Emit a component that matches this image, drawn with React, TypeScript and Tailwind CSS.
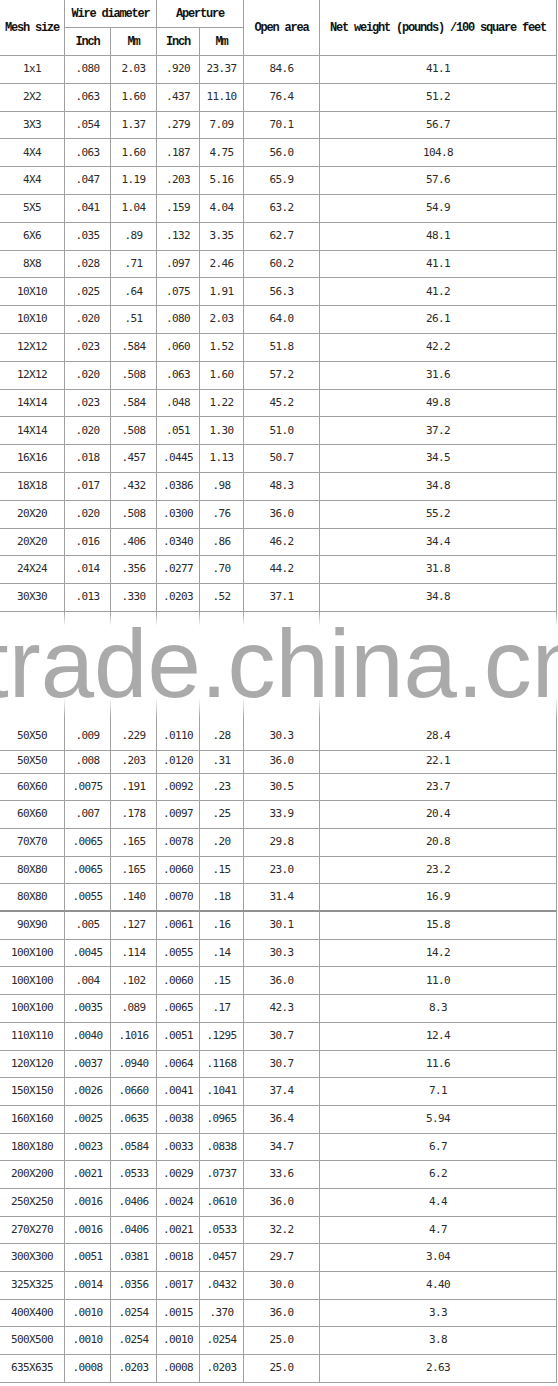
const cols = "grid grid-cols-[65px_46px_46px_43px_44px_76px_237px]";

const topRows: string[][] = [
  ["1x1", ".080", "2.03", ".920", "23.37", "84.6", "41.1"],
  ["2X2", ".063", "1.60", ".437", "11.10", "76.4", "51.2"],
  ["3X3", ".054", "1.37", ".279", "7.09", "70.1", "56.7"],
  ["4X4", ".063", "1.60", ".187", "4.75", "56.0", "104.8"],
  ["4X4", ".047", "1.19", ".203", "5.16", "65.9", "57.6"],
  ["5X5", ".041", "1.04", ".159", "4.04", "63.2", "54.9"],
  ["6X6", ".035", ".89", ".132", "3.35", "62.7", "48.1"],
  ["8X8", ".028", ".71", ".097", "2.46", "60.2", "41.1"],
  ["10X10", ".025", ".64", ".075", "1.91", "56.3", "41.2"],
  ["10X10", ".020", ".51", ".080", "2.03", "64.0", "26.1"],
  ["12X12", ".023", ".584", ".060", "1.52", "51.8", "42.2"],
  ["12X12", ".020", ".508", ".063", "1.60", "57.2", "31.6"],
  ["14X14", ".023", ".584", ".048", "1.22", "45.2", "49.8"],
  ["14X14", ".020", ".508", ".051", "1.30", "51.0", "37.2"],
  ["16X16", ".018", ".457", ".0445", "1.13", "50.7", "34.5"],
  ["18X18", ".017", ".432", ".0386", ".98", "48.3", "34.8"],
  ["20X20", ".020", ".508", ".0300", ".76", "36.0", "55.2"],
  ["20X20", ".016", ".406", ".0340", ".86", "46.2", "34.4"],
  ["24X24", ".014", ".356", ".0277", ".70", "44.2", "31.8"],
  ["30X30", ".013", ".330", ".0203", ".52", "37.1", "34.8"],
];

const bottomRows: string[][] = [
  ["50X50", ".009", ".229", ".0110", ".28", "30.3", "28.4"],
  ["50X50", ".008", ".203", ".0120", ".31", "36.0", "22.1"],
  ["60X60", ".0075", ".191", ".0092", ".23", "30.5", "23.7"],
  ["60X60", ".007", ".178", ".0097", ".25", "33.9", "20.4"],
  ["70X70", ".0065", ".165", ".0078", ".20", "29.8", "20.8"],
  ["80X80", ".0065", ".165", ".0060", ".15", "23.0", "23.2"],
  ["80X80", ".0055", ".140", ".0070", ".18", "31.4", "16.9"],
  ["90X90", ".005", ".127", ".0061", ".16", "30.1", "15.8"],
  ["100X100", ".0045", ".114", ".0055", ".14", "30.3", "14.2"],
  ["100X100", ".004", ".102", ".0060", ".15", "36.0", "11.0"],
  ["100X100", ".0035", ".089", ".0065", ".17", "42.3", "8.3"],
  ["110X110", ".0040", ".1016", ".0051", ".1295", "30.7", "12.4"],
  ["120X120", ".0037", ".0940", ".0064", ".1168", "30.7", "11.6"],
  ["150X150", ".0026", ".0660", ".0041", ".1041", "37.4", "7.1"],
  ["160X160", ".0025", ".0635", ".0038", ".0965", "36.4", "5.94"],
  ["180X180", ".0023", ".0584", ".0033", ".0838", "34.7", "6.7"],
  ["200X200", ".0021", ".0533", ".0029", ".0737", "33.6", "6.2"],
  ["250X250", ".0016", ".0406", ".0024", ".0610", "36.0", "4.4"],
  ["270X270", ".0016", ".0406", ".0021", ".0533", "32.2", "4.7"],
  ["300X300", ".0051", ".0381", ".0018", ".0457", "29.7", "3.04"],
  ["325X325", ".0014", ".0356", ".0017", ".0432", "30.0", "4.40"],
  ["400X400", ".0010", ".0254", ".0015", ".370", "36.0", "3.3"],
  ["500X500", ".0010", ".0254", ".0010", ".0254", "25.0", "3.8"],
  ["635X635", ".0008", ".0203", ".0008", ".0203", "25.0", "2.63"],
];

const cell =
  "flex items-center justify-center border-r border-b border-[#a0a0a0] whitespace-nowrap";
const head =
  "font-['Liberation_Mono',monospace] font-bold text-[12px] tracking-[-1.2px] text-[#111]";

function Row({ data, height, thick }: { data: string[]; height: string; thick?: boolean }) {
  return (
    <div className={`${cols} ${height}`}>
      {data.map((v, i) => (
        <div key={i} className={`${cell} ${thick ? "border-b-2 border-b-[#909090]" : ""}`}>
          {v}
        </div>
      ))}
    </div>
  );
}

export default function App() {
  return (
    <div className="w-[558px] bg-white pb-[3px] font-['DejaVu_Sans_Mono',monospace] text-[11px] tracking-[-0.6px] text-[#2a2a2a]">
      {/* header */}
      <div className={`${cols} grid-rows-[28px_28px]`}>
        <div className={`${cell} ${head} row-span-2`}>Mesh size</div>
        <div className={`${cell} ${head} col-span-2`}>Wire diameter</div>
        <div className={`${cell} ${head} col-span-2`}>Aperture</div>
        <div className={`${cell} ${head} row-span-2`}>Open area</div>
        <div className={`${cell} ${head} row-span-2`}>Net weight (pounds) /100 square feet</div>
        <div className={`${cell} ${head}`}>Inch</div>
        <div className={`${cell} ${head}`}>Mm</div>
        <div className={`${cell} ${head}`}>Inch</div>
        <div className={`${cell} ${head}`}>Mm</div>
      </div>

      {topRows.map((r, i) => (
        <Row key={i} data={r} height="h-[27.8px]" />
      ))}

      {/* watermark band */}
      <div className="relative h-[111px] overflow-hidden">
        <div className={`${cols} h-full`}>
          {[0, 1, 2, 3, 4, 5, 6].map((i) => (
            <div key={i} className="border-r border-[#a0a0a0]" />
          ))}
        </div>
        <div className="absolute inset-0 bg-[linear-gradient(to_bottom,transparent_0px,white_14px,white_86px,transparent_106px)]" />
        <div className="absolute left-[-18px] top-[4px] whitespace-nowrap font-['Liberation_Sans',Arial,sans-serif] text-[96px] leading-none tracking-normal text-[#aaaaaa]">
          trade.china.cn
        </div>
      </div>

      {bottomRows.map((r, i) => (
        <Row key={i} data={r} height={i === 1 ? "h-[23px]" : "h-[27.7px]"} thick={i === 6} />
      ))}
    </div>
  );
}
